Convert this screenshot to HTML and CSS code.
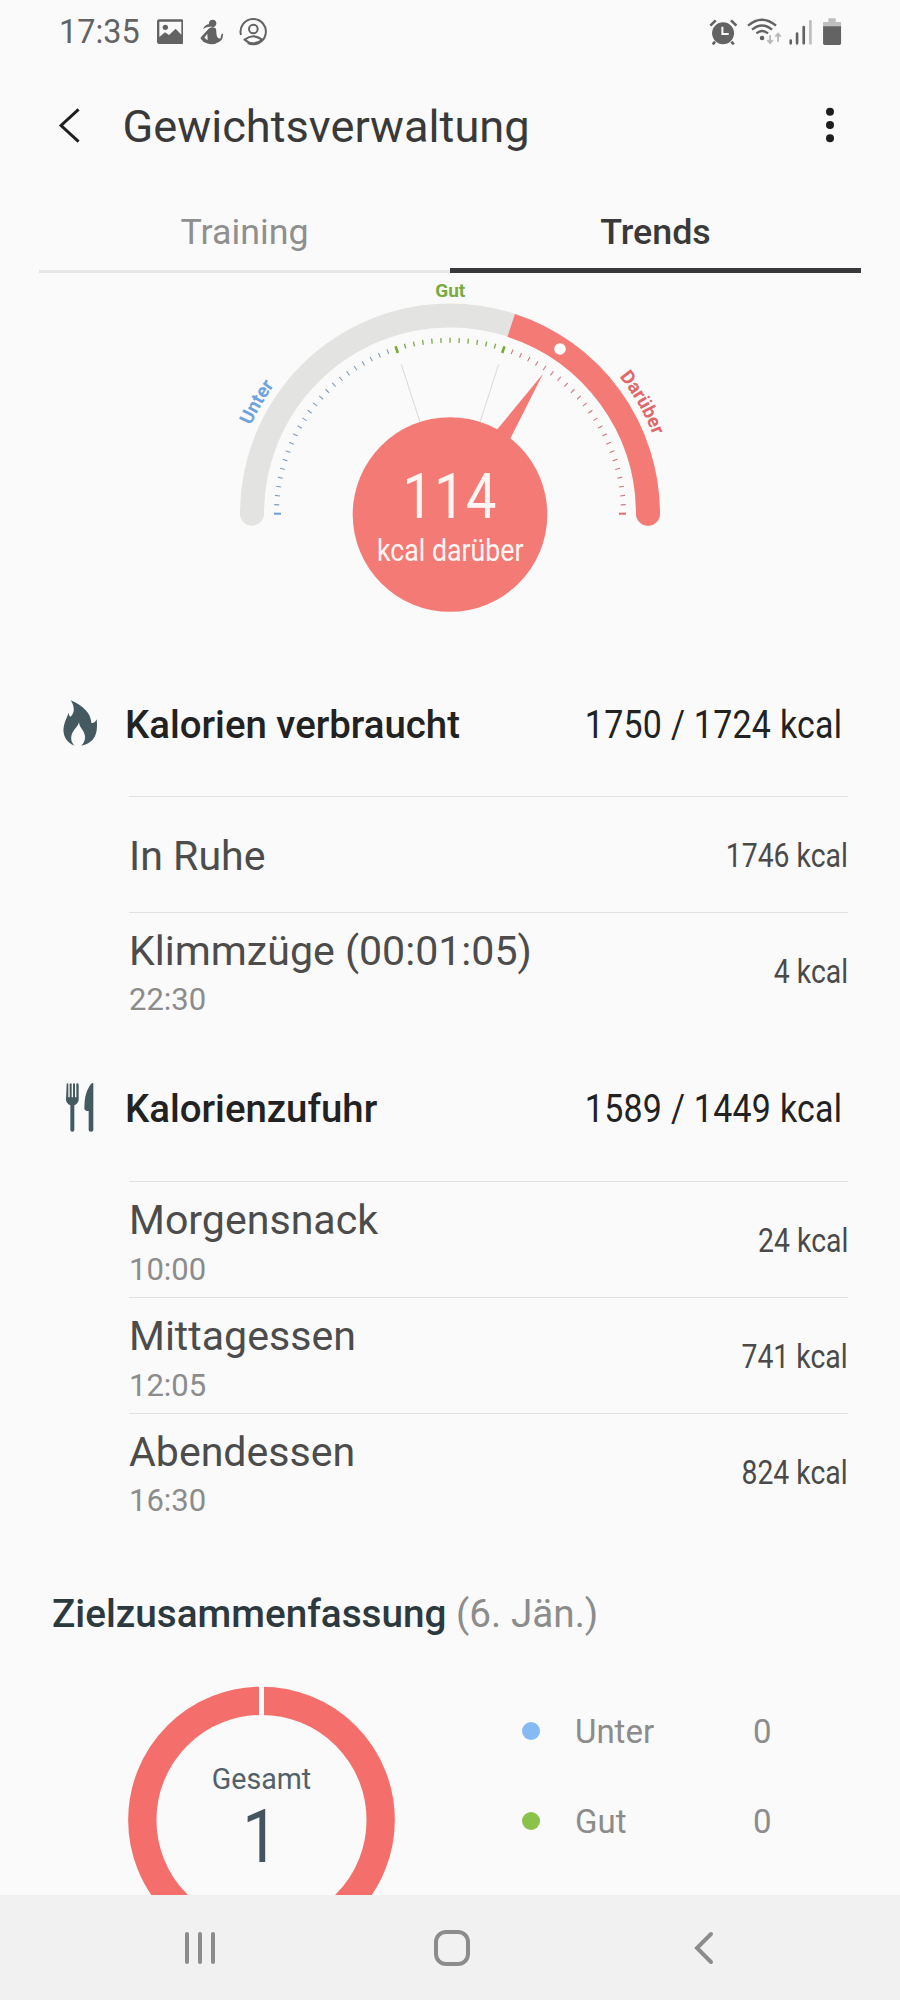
FILE: index.html
```html
<!DOCTYPE html>
<html lang="de">
<head>
<meta charset="utf-8">
<title>Gewichtsverwaltung</title>
<link rel="stylesheet" href="styles.css">
</head>
<body>
<div class="screen">
  <header class="status">
    <span class="clock">17:35</span>
    <svg class="ic-image" viewBox="380 50 80 90" width="26.7" height="30"><path fill="#636363" fill-rule="evenodd" d="M386 57h68q6 0 6 6v62q0 6-6 6h-68q-6 0-6-6V63q0-6 6-6zM387 64v46l17-14 12 8 20-19 17 18V64z"/><circle cx="405" cy="81" r="8" fill="#636363"/></svg>
    <svg class="ic-yoga" viewBox="510 50 70 90" width="23.3" height="30"><g fill="#636363"><circle cx="548" cy="69" r="11"/><path d="M519 86q5-13 20-15l3 8q-11-1-23 7zM536 85q12-9 22 0l2 20q2 11 12 9 0-7 3-14h4q1 22-17 27-12 8-32 2-11-4-18-14-1-3 2-6zM532 100l-9 12 10 8z" fill-rule="evenodd"/></g></svg>
    <svg class="ic-person" viewBox="628 50 86 90" width="28.7" height="30"><g fill="none" stroke="#636363" stroke-width="6"><path d="M634 104A38 38 0 1 1 654 128"/><circle cx="671" cy="86" r="13"/><path d="M645 118q26-20 52 0-26 22-52 0z"/></g></svg>
    <span class="spacer"></span>
    <svg class="ic-right" viewBox="85 50 405 90" width="135" height="30">
      <circle cx="129" cy="99" r="33" fill="#636363"/>
      <path d="M91 76l16-16M153 60l16 16M105 124l-7 8M154 124l7 8" stroke="#636363" stroke-width="8" fill="none"/>
      <path d="M127 79v22h19" stroke="#fafafa" stroke-width="6" fill="none"/>
      <g fill="none" stroke="#636363" stroke-width="7"><path d="M204 76q41-36 84 0M216 88q30-25 60 0M229 99q17-14 35 0"/></g>
      <circle cx="246" cy="113" r="7" fill="#636363"/>
      <path d="M270 105v22M262 119l8 9 8-9M294 124v-22M286 109l8-9 8 9" stroke="#b9b9b9" stroke-width="5.500" fill="none"/>
      <g stroke-width="8" stroke-linecap="round" stroke="#636363"><path d="M332 121v8M351 100v29M371 80v49"/><path stroke="#bdbdbd" d="M391 63v66"/></g>
      <path fill="#bfbfbf" d="M445 54h22v11h16v14h-54V65h16z"/><path fill="#636363" d="M429 78h54v51q0 5-5 5h-44q-5 0-5-5z"/>
    </svg>
  </header>

  <div class="appbar">
    <svg class="back" viewBox="84 318 66 112" width="22" height="37"><path d="M146 325l-53 49 53 49" fill="none" stroke="#1e1e1e" stroke-width="9"/></svg>
    <h1>Gewichtsverwaltung</h1>
    <svg class="more" viewBox="0 0 8 36" width="8" height="36"><g fill="#1e1e1e"><circle cx="4" cy="4.700" r="4"/><circle cx="4" cy="18" r="4"/><circle cx="4" cy="31.300" r="4"/></g></svg>
  </div>

  <nav class="tabs">
    <a class="tab"><span>Training</span></a>
    <a class="tab active"><span>Trends</span></a>
  </nav>

  <svg class="gauge" viewBox="0 273 900 373" width="900" height="373">
    <defs>
      <path id="labelArc" d="M232.300 513.700A217.700 217.700 0 0 1 667.700 513.700"/>
    </defs>
    <path d="M252 513.700A198 198.300 0 0 1 648 513.700" fill="none" stroke="#e3e3e1" stroke-width="24" stroke-linecap="round"/>
    <path d="M636 512h24v1.700a12 12 0 0 1-24 0z" fill="#f47a76"/>
    <path d="M511.200 325.400A198 198.300 0 0 1 648 513.700" fill="none" stroke="#f47a76" stroke-width="24"/>
    <circle cx="560" cy="349" r="5.800" fill="#fff"/>
    <g fill="none" stroke-width="5" stroke-dasharray="0.120 0.880" stroke-dashoffset="0.060">
      <path pathLength="24" stroke="#7e9dbd" d="M276.500 513.700A173.500 173.500 0 0 1 396.400 348.700"/>
      <path pathLength="12" stroke="#7fae4a" stroke-dasharray="0.150 0.850" stroke-dashoffset="0.070" d="M396.400 348.700A173.500 173.500 0 0 1 503.600 348.700"/>
      <path pathLength="24" stroke="#d3777c" d="M503.600 348.700A173.500 173.500 0 0 1 623.500 513.700"/>
    </g>
    <g stroke-width="2">
      <path stroke="#6f9fd0" d="M274 513.700h7"/>
      <path stroke="#e06b6b" d="M619 513.700h7"/>
      <path stroke="#74ad35" stroke-width="2.600" d="M395.600 346.300l2.200 6.700M504.400 346.300l-2.200 6.700"/>
    </g>
    <path d="M401.400 364.500l20 62M498.600 364.500l-20 62" stroke="#d9d9d9" stroke-width="1"/>
    <path d="M543 373.800L497.300 429.300l-8 14 12 10 8.700-14z" fill="#f47a76"/>
    <circle cx="450" cy="514.500" r="97.300" fill="#f47a76"/>
    <text class="g-label good" x="450.300" y="296.500" text-anchor="middle">Gut</text>
    <text class="g-label under" text-anchor="middle"><textPath href="#labelArc" startOffset="16.700%">Unter</textPath></text>
    <text class="g-label over" text-anchor="middle"><textPath href="#labelArc" startOffset="83.300%">Darüber</textPath></text>
    <text class="g-value" transform="translate(402.600 517.700) scale(.86 1)">114</text>
    <text class="g-unit" x="377" y="561" textLength="146.500" lengthAdjust="spacingAndGlyphs">kcal darüber</text>
  </svg>

  <section class="group burned">
    <div class="head">
      <svg viewBox="60 50 120 156" width="40" height="52"><path fill="#455a60" d="M92 60C128 76 152 97 154 127 162 130 167 123 170 117 174 155 168 188 124 196 137 184 138 168 130 153 124 143 118 138 117 126 113 140 100 148 95 163 91 178 96 188 104 196 76 187 66 160 72 135 75 120 82 110 86 97 87 104 88 108 92 109 105 98 104 78 92 60z"/></svg>
      <h2>Kalorien verbraucht</h2><span class="sum">1750 / 1724 kcal</span>
    </div>
    <ul>
      <li><div><b>In Ruhe</b></div><span class="kcal">1746 kcal</span></li>
      <li><div><b>Klimmzüge (00:01:05)</b><i>22:30</i></div><span class="kcal">4 kcal</span></li>
    </ul>
  </section>

  <section class="group eaten">
    <div class="head">
      <svg viewBox="60 64 120 156" width="40" height="52"><path fill="#455a60" d="M80 73q0-2 2.500-2t2.500 2v40h4V73q0-2 3-2t3 2v40h4V73q0-2 3-2t3 2v40h4V73q0-2 3-2t4 4v45q0 10-13 17v74q0 5-6 5t-6-5v-74q-13-7-13-17zM160 70v141q0 5-7 5t-7-5v-57q-14 0-13-10 0-40 14-62 7-14 13-12z"/></svg>
      <h2>Kalorienzufuhr</h2><span class="sum">1589 / 1449 kcal</span>
    </div>
    <ul>
      <li><div><b>Morgensnack</b><i>10:00</i></div><span class="kcal">24 kcal</span></li>
      <li><div><b>Mittagessen</b><i>12:05</i></div><span class="kcal">741 kcal</span></li>
      <li><div><b>Abendessen</b><i>16:30</i></div><span class="kcal">824 kcal</span></li>
    </ul>
  </section>

  <section class="summary">
    <h2>Zielzusammenfassung <span>(6. Jän.)</span></h2>
    <div class="cols">
      <svg class="donut" viewBox="128 1686 268 212" width="268" height="212">
        <circle cx="261.500" cy="1820" r="119.200" fill="none" stroke="#f46f6b" stroke-width="28.300"/>
        <path d="M261.500 1680v40" stroke="#fff" stroke-width="5"/>
        <text class="d-label" x="261.500" y="1788.700" text-anchor="middle">Gesamt</text>
        <text class="d-value" transform="translate(260.500 1862) scale(.86 1)" text-anchor="middle">1</text>
      </svg>
      <div class="legend">
        <div class="row"><span class="dot blue"></span><span class="name">Unter</span><span class="num">0</span></div>
        <div class="row"><span class="dot green"></span><span class="name">Gut</span><span class="num">0</span></div>
      </div>
    </div>
  </section>

  <footer class="sysnav">
    <svg viewBox="0 0 34 34" width="34" height="34"><path d="M4 3v28M17 3v28M30 3v28" stroke="#8c8c8c" stroke-width="4" stroke-linecap="round"/></svg>
    <svg class="home" viewBox="0 0 36 36" width="36" height="36"><rect x="2" y="2" width="32" height="32" rx="10" fill="none" stroke="#8c8c8c" stroke-width="4"/></svg>
    <svg viewBox="0 0 20 34" width="20" height="34"><path d="M17 3L3 17l14 14" fill="none" stroke="#8c8c8c" stroke-width="4" stroke-linecap="round"/></svg>
  </footer>
</div>
</body>
</html>
```

FILE: styles.css
```css
* { box-sizing: border-box; }
body { margin: 0; background: #fafafa; font-family: Roboto, "Noto Sans", sans-serif; color: #222; }
h1, h2, ul, li { margin: 0; padding: 0; list-style: none; }
svg { display: block; flex: none; }
.screen { width: 900px; height: 2000px; overflow: hidden; display: flex; flex-direction: column; }

.status { height: 66px; display: flex; align-items: center; padding: 0 56px 2px 59px; flex: none; }
.clock { font-size: 32.400px; line-height: 32px; color: #636363; width: 97.700px; white-space: nowrap; }
.ic-yoga { margin-left: 16.600px; }
.ic-person { margin-left: 16px; }
.spacer { flex: 1; }
.ic-right { margin-right: -20px; transform: translateX(-20.600px); }

.appbar { height: 119px; display: flex; align-items: center; padding: 0 66.500px 0 58px; flex: none; }
.appbar .back { margin-top: -1px; }
.appbar h1 { flex: 1; margin: 3px 0 0 42.500px; font-size: 45.200px; font-weight: 400; line-height: 60px; color: #393939; white-space: nowrap; }
.appbar .more { margin-top: -2px; }

.tabs { height: 88px; display: flex; padding: 0 39px; flex: none; }
.tab { flex: 1; height: 88px; display: flex; justify-content: center; padding-top: 27px; font-size: 35.800px; line-height: 40px; color: #8f8f8f; box-shadow: inset 0 -3px #e6e6e6; }
.tab.active { font-weight: 500; color: #393939; box-shadow: inset 0 -5px #39393b; }

.gauge { flex: none; }
.g-label { font-size: 19px; font-weight: 700; }
.good { fill: #78ab41; }
.under { fill: #6ea3df; }
.over { fill: #e0676a; }
.g-value { font-size: 63px; fill: #fff6f4; letter-spacing: 1.500px; }
.g-unit { font-size: 31.500px; fill: #fff6f4; }

.group { flex: none; }
.head { height: 150px; display: flex; align-items: center; padding: 8px 58px 0 60px; }
.eaten .head { height: 154px; padding-top: 10px; }
.head svg { margin-top: -4px; }
.head h2 { flex: 1; margin-left: 25px; font-size: 38.400px; font-weight: 500; line-height: 50px; white-space: nowrap; }
.sum { font-size: 38px; line-height: 50px; letter-spacing: .3px; white-space: nowrap; transform: scaleX(.893); transform-origin: right; }
.group ul { margin: 0 52px 0 129px; }
.group li { height: 115.700px; border-top: 1.500px solid #e1e1e1; display: flex; align-items: center; justify-content: space-between; padding-top: 3px; }
.group b { display: block; font-weight: 400; font-size: 41.100px; line-height: 56px; color: #4c4c4c; white-space: nowrap; }
.group i { display: block; margin-top: 1.500px; font-style: normal; font-size: 31px; line-height: 40px; color: #8c8c8c; }
.kcal { font-size: 32.500px; color: #4a4a4a; white-space: nowrap; transform: scaleX(.873); transform-origin: right; }

.summary { flex: none; height: 362px; padding: 0 0 0 52px; }
.summary h2 { padding-top: 58px; font-size: 38.700px; font-weight: 500; line-height: 56px; color: #2c393f; white-space: nowrap; }
.summary h2 span { font-weight: 400; color: #8c8c8c; }
.cols { display: flex; padding: 44px 0 0 76px; }
.d-label { font-size: 28.600px; fill: #52606b; }
.d-value { font-size: 75px; fill: #455560; }
.legend { padding-left: 126px; }
.row { height: 90px; display: flex; align-items: center; font-size: 33px; color: #8c8c8c; }
.dot { width: 18px; height: 18px; border-radius: 50%; }
.blue { background: #86baf2; }
.green { background: #8bc34a; }
.name { width: 178px; margin-left: 35px; }

.sysnav { height: 105px; margin-top: auto; background: #f1f1f1; display: flex; align-items: center; padding: 0 186.500px 0 183px; justify-content: space-between; flex: none; position: relative; }
.home { margin-right: 7px; }
```
